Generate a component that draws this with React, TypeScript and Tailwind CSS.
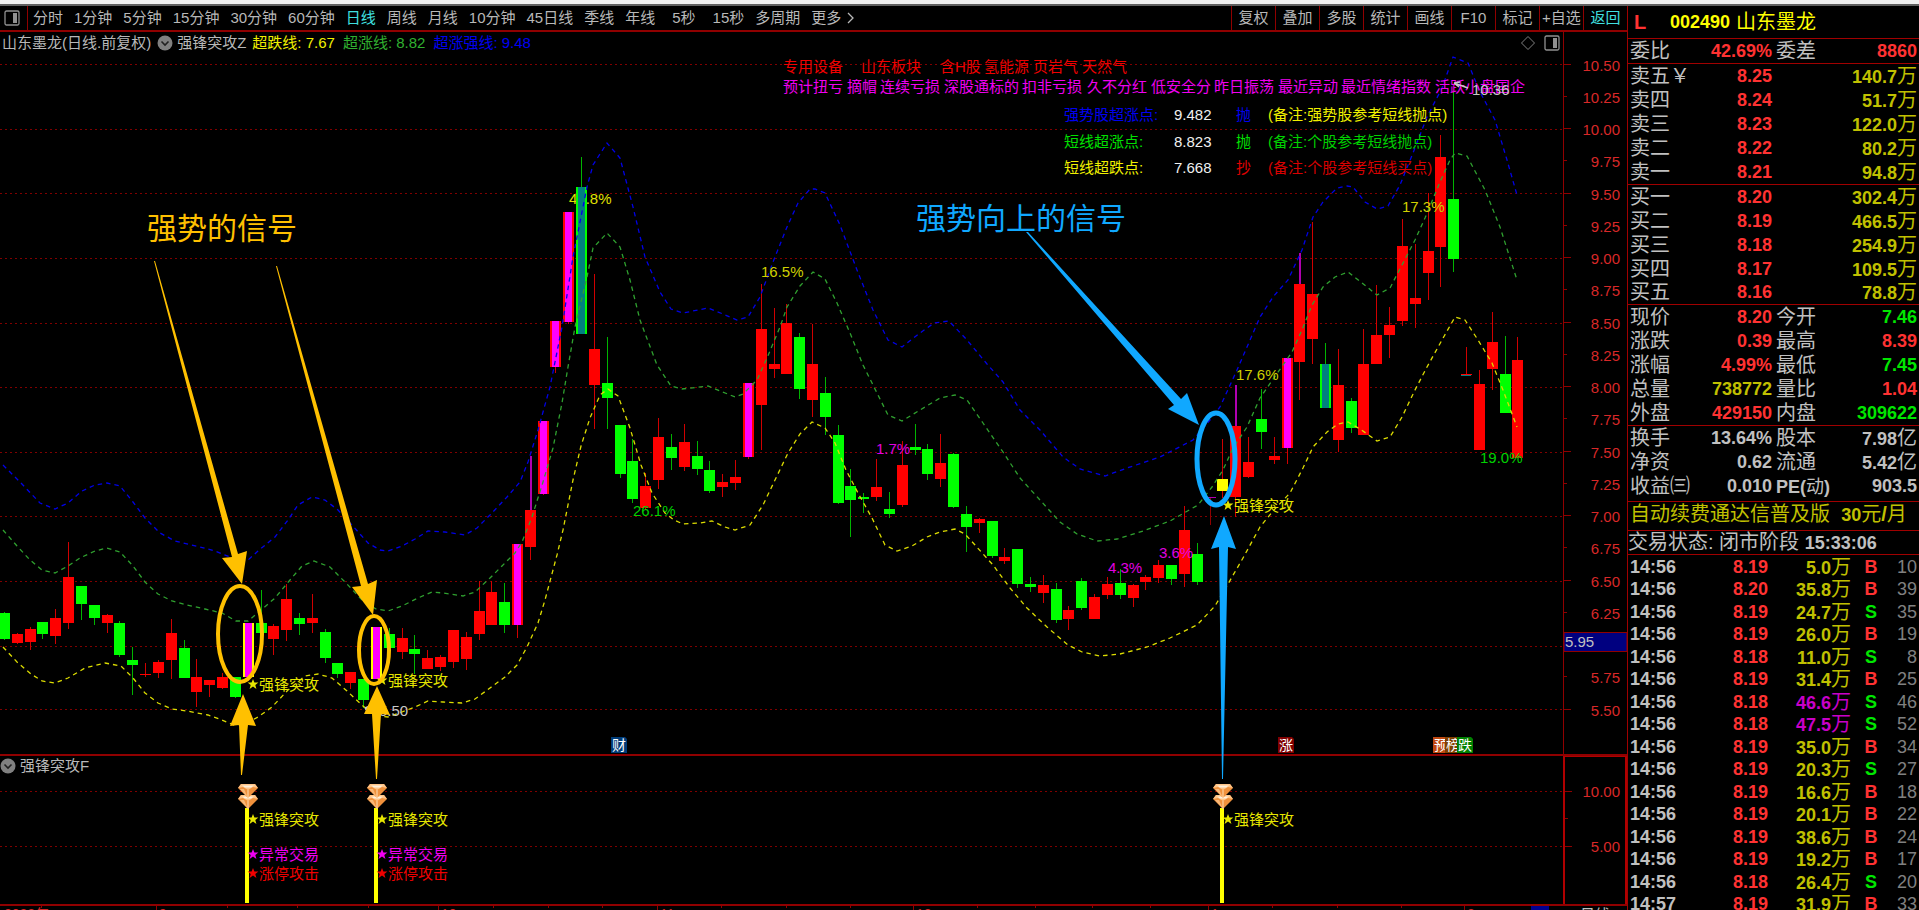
import clsx from "clsx";
import React, { useState } from "react";

// [high, top, bottom, low, kind, purple upper wick]
// r = up, g = down, m = limit up, s = signal bar, t = reversal, y = breakout
type Candle = [number, number, number, number, string, boolean?];

const candles: Candle[] = [
    [612, 613, 639, 640, "g"], [633, 634, 643, 644, "r"], [627, 629, 642, 650, "r"],
    [622, 622, 634, 639, "g"], [609, 618, 636, 644, "r"], [542, 577, 623, 629, "r"],
    [586, 586, 604, 620, "g"], [605, 605, 618, 625, "g"], [614, 615, 623, 633, "r"],
    [621, 623, 655, 657, "g"], [647, 660, 665, 695, "g"], [663, 674, 675, 677, "r"],
    [660, 662, 673, 678, "r"], [619, 633, 660, 679, "r"], [640, 648, 678, 678, "g"],
    [659, 677, 692, 707, "r"], [680, 680, 685, 697, "r"], [673, 677, 688, 689, "r"],
    [677, 677, 697, 698, "g"], [623, 623, 677, 677, "s"], [590, 623, 633, 633, "g"],
    [624, 626, 639, 655, "r"], [584, 599, 630, 641, "r"], [613, 618, 624, 635, "g"],
    [594, 618, 623, 633, "r"], [629, 632, 658, 663, "g"], [663, 663, 674, 678, "g"],
    [672, 672, 683, 689, "r"], [679, 679, 700, 708, "g"], [627, 627, 679, 679, "s"],
    [628, 634, 648, 648, "g"], [628, 638, 652, 659, "r"], [635, 649, 654, 674, "g"],
    [650, 658, 669, 669, "r"], [655, 657, 667, 671, "r"], [630, 630, 662, 668, "r"],
    [632, 637, 659, 670, "r"], [581, 611, 634, 640, "r"], [581, 592, 625, 625, "r"],
    [583, 602, 625, 633, "g"], [544, 544, 625, 638, "m"], [456, 510, 547, 560, "r", true],
    [421, 421, 494, 495, "m"], [321, 321, 367, 373, "m"], [212, 212, 322, 324, "m"],
    [157, 187, 334, 334, "t"], [274, 349, 385, 429, "r"], [337, 383, 398, 429, "g"],
    [425, 425, 474, 478, "g"], [439, 461, 499, 503, "g"], [473, 486, 508, 510, "r"],
    [418, 437, 480, 489, "r"], [434, 447, 458, 470, "g"], [424, 442, 467, 471, "r"],
    [441, 456, 469, 475, "g"], [461, 470, 491, 493, "g"], [474, 482, 487, 497, "r"],
    [460, 477, 483, 490, "r"], [383, 383, 457, 459, "m"], [284, 329, 405, 450, "r"],
    [308, 364, 369, 378, "r"], [304, 323, 374, 374, "r"], [333, 337, 389, 399, "g"],
    [324, 364, 400, 417, "r"], [377, 393, 417, 435, "g"], [425, 435, 503, 504, "g"],
    [469, 486, 500, 537, "g"], [493, 497, 499, 513, "g"], [459, 487, 497, 501, "r"],
    [492, 509, 514, 518, "g"], [441, 465, 505, 507, "r"], [424, 447, 450, 455, "g"],
    [444, 449, 474, 480, "g"], [434, 463, 479, 487, "r"], [453, 454, 507, 508, "g"],
    [506, 514, 527, 552, "g"], [518, 519, 523, 533, "r"], [521, 521, 556, 558, "g"],
    [548, 557, 561, 564, "r"], [549, 549, 584, 588, "g"], [577, 584, 587, 592, "g"],
    [575, 585, 593, 603, "r"], [583, 589, 620, 623, "g"], [606, 610, 619, 630, "r"],
    [578, 581, 608, 610, "g"], [594, 597, 619, 619, "r"], [577, 584, 595, 599, "r"],
    [569, 583, 595, 599, "g"], [584, 585, 598, 607, "r"], [575, 577, 582, 590, "r"],
    [560, 565, 578, 583, "r"], [565, 565, 579, 585, "g"], [506, 530, 574, 587, "r"],
    [543, 554, 582, 585, "g"], [497, 497, 498, 525, "f"], [439, 479, 491, 498, "y"],
    [385, 426, 497, 517, "r", true], [437, 462, 477, 478, "r"], [389, 419, 432, 449, "g"],
    [437, 456, 460, 464, "r"], [358, 358, 448, 464, "m"], [253, 284, 362, 400, "r", true],
    [222, 294, 339, 364, "r"], [343, 364, 408, 408, "t"], [349, 385, 440, 452, "r"],
    [398, 401, 428, 433, "g"], [329, 364, 435, 435, "r"], [285, 335, 364, 364, "r"],
    [307, 325, 335, 358, "r"], [219, 246, 321, 326, "r"], [244, 298, 304, 328, "r"],
    [193, 251, 273, 300, "r"], [135, 157, 247, 287, "r"], [92, 199, 259, 272, "g"],
    [347, 374, 375, 375, "r"], [370, 384, 450, 450, "r"], [312, 342, 369, 390, "r"],
    [336, 374, 413, 413, "g"], [337, 360, 458, 458, "r"],
];

const lowerBand =
    "3,647 17,662 31,674 42,681 55,683 68,678 85,668 105,663 121,666 133,678 145,693 158,703 172,709 187,711 208,715 222,720 234,725 245,724 258,717 272,707 288,690 305,676 318,674 332,678 347,691 363,706 376,716 388,717 402,712 415,707 428,701 443,702 462,703 475,699 490,688 505,677 517,665 527,647 538,623 545,600 553,570 557,555 563,530 573,480 581,446 590,418 600,395 608,389 618,396 630,428 641,465 652,493 665,513 674,520 683,524 700,523 712,521 725,527 735,530 750,525 763,505 775,480 788,453 800,434 812,422 825,428 835,443 846,470 858,493 872,518 885,545 897,551 912,546 927,537 940,532 955,529 965,534 975,545 993,565 1010,588 1027,608 1047,627 1068,645 1082,652 1100,656 1120,654 1147,647 1170,638 1197,625 1215,606 1228,584 1243,558 1260,527 1273,511 1290,493 1303,468 1313,447 1327,432 1338,424 1348,422 1360,429 1377,441 1390,437 1402,417 1415,390 1427,367 1442,340 1455,317 1465,320 1478,340 1492,363 1503,390 1517,427";
const middleBand =
    "3,530 17,546 30,560 42,570 55,573 68,566 80,558 95,551 107,548 120,552 133,566 145,582 158,594 172,601 187,605 205,609 222,613 236,621 248,621 260,611 275,598 290,580 302,566 314,561 330,567 345,582 363,601 376,609 388,611 402,606 418,598 432,592 443,593 463,596 475,592 490,578 502,566 515,553 522,542 532,517 543,482 553,448 562,403 568,367 575,327 587,277 593,248 607,233 620,247 630,280 640,320 657,365 671,386 682,389 708,386 735,397 743,394 757,380 767,358 780,327 787,307 800,286 813,272 825,279 837,303 850,333 863,365 877,393 888,415 902,421 920,410 940,398 955,395 967,400 983,423 1003,452 1020,478 1040,500 1060,522 1077,534 1097,541 1117,539 1143,531 1170,521 1198,505 1212,487 1223,470 1233,448 1247,427 1260,398 1283,365 1292,352 1302,330 1312,305 1323,287 1335,277 1348,272 1362,283 1377,295 1390,288 1402,265 1415,240 1425,218 1440,182 1450,160 1455,153 1467,156 1485,190 1500,227 1517,280";
const upperBand =
    "3,465 20,482 40,503 55,509 68,503 82,491 95,485 107,483 120,486 133,502 145,518 160,533 175,541 200,547 215,551 230,557 247,561 258,551 275,537 288,520 298,505 312,497 325,500 338,510 352,525 368,543 380,550 388,551 402,546 415,539 428,531 445,532 465,535 477,528 490,515 507,497 520,482 528,462 538,430 550,387 562,327 573,257 587,187 593,165 607,143 620,158 633,207 645,257 660,292 671,309 683,313 708,308 723,314 737,320 748,317 760,297 773,262 787,227 798,203 810,189 815,189 825,193 840,225 857,270 873,310 888,340 902,347 920,333 934,323 949,321 967,340 987,364 1003,382 1020,410 1040,430 1063,457 1080,469 1105,476 1127,468 1160,457 1193,440 1210,420 1220,407 1237,370 1247,347 1260,317 1273,297 1288,280 1302,250 1313,217 1323,202 1337,188 1347,186 1353,187 1365,202 1377,209 1388,206 1400,185 1413,153 1427,117 1442,88 1453,57 1468,63 1480,92 1495,120 1507,160 1517,195";

const bands = [
    { points: upperBand, color: "#0000e6" },
    { points: middleBand, color: "#2fa02f" },
    { points: lowerBand, color: "#dcdc00" },
];

const priceLabels = [
    "10.50", "10.25", "10.00", "9.75", "9.50", "9.25", "9.00", "8.75", "8.50", "8.25",
    "8.00", "7.75", "7.50", "7.25", "7.00", "6.75", "6.50", "6.25", "6.00", "5.75", "5.50",
];

const percents: [number, number, string, string][] = [
    [761, 277, "16.5%", "#d0d000"],
    [876, 454, "1.7%", "#e000e0"],
    [633, 516, "26.1%", "#00d000"],
    [1108, 573, "4.3%", "#e000e0"],
    [1159, 558, "3.6%", "#e000e0"],
    [1236, 380, "17.6%", "#d0d000"],
    [1402, 212, "17.3%", "#d0d000"],
    [1480, 463, "19.0%", "#00d000"],
];

const concepts: [number, string][] = [
    [783, "专用设备"], [861, "山东板块"], [940, "含H股"], [984, "氢能源"],
    [1033, "页岩气"], [1082, "天然气"],
];

const themes: [number, string][] = [
    [783, "预计扭亏"], [847, "摘帽"], [880, "连续亏损"], [944, "深股通标的"],
    [1022, "扣非亏损"], [1087, "久不分红"], [1151, "低安全分"], [1214, "昨日振荡"],
    [1278, "最近异动"], [1341, "最近情绪指数"], [1435, "活跃小盘国企"],
];

const points: [number, string, string, string, string, string, string][] = [
    [120, "强势股超涨点:", "#0000f0", "9.482", "抛", "(备注:强势股参考短线抛点)", "#f0f000"],
    [147, "短线超涨点:", "#00e000", "8.823", "抛", "(备注:个股参考短线抛点)", "#00d000"],
    [173, "短线超跌点:", "#f0f000", "7.668", "抄", "(备注:个股参考短线买点)", "#d80000"],
];

const badges: [number, string, string][] = [
    [611, "财", "#003c78"],
    [1278, "涨", "#800000"],
    [1433, "预", "#c04810"],
    [1445, "榜", "#804000"],
    [1457, "跌", "#008000"],
];

const periods = [
    "分时", "1分钟", "5分钟", "15分钟", "30分钟", "60分钟", "日线", "周线", "月线",
    "10分钟", "45日线", "季线", "年线", "5秒", "15秒", "多周期", "更多",
];
const actions = ["复权", "叠加", "多股", "统计", "画线", "F10", "标记", "+自选", "返回"];

const asks = [
    ["卖五￥", "8.25", "140.7"],
    ["卖四", "8.24", "51.7"],
    ["卖三", "8.23", "122.0"],
    ["卖二", "8.22", "80.2"],
    ["卖一", "8.21", "94.8"],
];
const bids = [
    ["买一", "8.20", "302.4"],
    ["买二", "8.19", "466.5"],
    ["买三", "8.18", "254.9"],
    ["买四", "8.17", "109.5"],
    ["买五", "8.16", "78.8"],
];

const RED = "text-[#ff3232]";
const GREEN = "text-[#00e600]";
const YELLOW = "text-[#c0c000]";
const GRAY = "text-[#c0c0c0]";

const quotes = [
    ["现价", "8.20", RED, "今开", "7.46", GREEN],
    ["涨跌", "0.39", RED, "最高", "8.39", RED],
    ["涨幅", "4.99%", RED, "最低", "7.45", GREEN],
    ["总量", "738772", YELLOW, "量比", "1.04", RED],
    ["外盘", "429150", RED, "内盘", "309622", GREEN],
];
const shares = [
    ["换手", "13.64%", GRAY, "股本", "7.98亿", GRAY],
    ["净资", "0.62", GRAY, "流通", "5.42亿", GRAY],
    ["收益㈢", "0.010", GRAY, "PE(动)", "903.5", GRAY],
];

const ticks: [string, string, string, string, number][] = [
    ["14:56", "8.19", "5.0", "B", 10],
    ["14:56", "8.20", "35.8", "B", 39],
    ["14:56", "8.19", "24.7", "S", 35],
    ["14:56", "8.19", "26.0", "B", 19],
    ["14:56", "8.18", "11.0", "S", 8],
    ["14:56", "8.19", "31.4", "B", 25],
    ["14:56", "8.18", "46.6", "S", 46],
    ["14:56", "8.18", "47.5", "S", 52],
    ["14:56", "8.19", "35.0", "B", 34],
    ["14:56", "8.19", "20.3", "S", 27],
    ["14:56", "8.19", "16.6", "B", 18],
    ["14:56", "8.19", "20.1", "B", 22],
    ["14:56", "8.19", "38.6", "B", 24],
    ["14:56", "8.19", "19.2", "B", 17],
    ["14:56", "8.18", "26.4", "S", 20],
    ["14:57", "8.19", "31.9", "B", 33],
];

function CandleBar({ index, candle }: { index: number; candle: Candle }) {
    const [high, top, bottom, low, kind, purple] = candle;
    const x = Math.round(4 + index * 12.825);
    const down = kind == "g" || kind == "t";
    const wick = down ? "#00b400" : kind == "f" ? "#900000" : "#d00000";
    const fill = down ? "#00ff00" : kind == "s" || kind == "y" ? "#ffff00" : "#ff0000";
    const core = kind == "m" || kind == "s" ? "#ff00ff" : kind == "t" ? "#008080" : null;

    return (
        <g shapeRendering="crispEdges">
            {high < top && (
                <rect x={x} y={high} width={purple ? 2 : 1} height={top - high} fill={purple ? "#b000b0" : wick} />
            )}
            {low > bottom && <rect x={x} y={bottom} width={1} height={low - bottom} fill={wick} />}
            <rect x={x - 5} y={top} width={11} height={Math.max(bottom - top, 1)} fill={kind == "f" ? "#b000b0" : fill} />
            {core && <rect x={x - 3} y={top} width={7} height={bottom - top} fill={core} />}
        </g>
    );
}

function GridLine({ y }: { y: number }) {
    return (
        <path d={`M0 ${y}.5H1563`} stroke="#800000" strokeDasharray="2 3" shapeRendering="crispEdges" />
    );
}

function Star({ x, y, label, color }: { x: number; y: number; label: string; color: string }) {
    return (
        <g fill={color} transform={`translate(${x} ${y})`}>
            <path d="M5 -5 L6.4 -1.4 10.4 -1.4 7.3 1 8.4 5 5 2.6 1.6 5 2.7 1 -.4 -1.4 3.6 -1.4Z" />
            <text x={11} y={6} fontSize={15}>
                {label}
            </text>
        </g>
    );
}

function Diamond({ x }: { x: number }) {
    return (
        <g transform={`translate(${x} 784)`}>
            {[11, 0].map((y) => (
                <g key={y} transform={`translate(0 ${y})`}>
                    <path d="M-10 4 L-7 0 H7 L10 4 L0 14Z" fill="#f0913c" />
                    <path d="M-10 4 L-7 0 H7 L10 4 L5 3 L0 6 L-5 3Z" fill="#ffc68a" />
                    <path d="M-6 1.5 H6 L3 3.5 H-3Z" fill="#fff0dc" />
                    <path d="M-4 5 L0 14 L-8 5Z" fill="#f9b878" />
                    <path d="M0 6 V14" stroke="#ffe0b8" />
                </g>
            ))}
        </g>
    );
}

function PriceChart() {
    return (
        <svg viewBox="0 54 1627 700" className="block w-full h-auto" fontSize={15}>
            {[65, 130, 194, 259, 324, 388, 453, 517, 582, 647, 710].map((y) => (
                <GridLine key={y} y={y - 1} />
            ))}
            <text x={569} y={204} fill="#e0e000">41.8%</text>
            {candles.map((candle, i) => (
                <CandleBar key={i} index={i} candle={candle} />
            ))}
            <path d="M1461 375.5h10" stroke="#008080" />
            {bands.map((band) => (
                <polyline key={band.color} points={band.points} fill="none" stroke={band.color} strokeWidth={1.3} strokeDasharray="4.5 4" />
            ))}
            {percents.map(([x, y, label, color]) => (
                <text key={label} x={x} y={y} fill={color}>{label}</text>
            ))}

            {concepts.map(([x, label]) => (
                <text key={label} x={x} y={72} fill="#f00000">{label}</text>
            ))}
            {themes.map(([x, label]) => (
                <text key={label} x={x} y={92} fill="#f000f0">{label}</text>
            ))}
            {points.map(([y, label, color, value, action, note, noteColor]) => (
                <g key={label}>
                    <text x={1064} y={y} fill={color}>{label}</text>
                    <text x={1174} y={y} fill="#f0f0f0">{value}</text>
                    <text x={1236} y={y} fill={action == "抄" ? "#e00000" : color}>{action}</text>
                    <text x={1268} y={y} fill={noteColor}>{note}</text>
                </g>
            ))}

            <g fill="#c8c8c8">
                <text x={1472} y={95}>10.36</text>
                <text x={379} y={716}>5.50</text>
                <path d="M1454 83l14 5M1454 83l5 4M1454 83l6-1M365 708l12 3M365 708l3 4M365 708l5-2" stroke="#c8c8c8" strokeWidth={1.5} />
            </g>
            <Star x={248} y={684} label="强锋突攻" color="#e6e600" />
            <Star x={377} y={680} label="强锋突攻" color="#e6e600" />
            <Star x={1223} y={505} label="强锋突攻" color="#e6e600" />

            {badges.map(([x, label, color]) => (
                <g key={label}>
                    <path d={`M${x} 737h14l2 2v14h-16z`} fill={color} />
                    <text x={x + 1} y={750} fontSize={14} fill="#fff">{label}</text>
                </g>
            ))}

            <path d="M1563.5 54V754" stroke="#900000" />
            {priceLabels.map((label, i) => {
                const y = Math.round(64.5 + i * 32.25);
                if (label == "6.00") return null;
                return (
                    <g key={label}>
                        <path d={`M1564 ${y - 0.5}h${i % 2 == 0 ? 7 : 3}`} stroke="#900000" />
                        <text x={1620} y={y + 6} fill="#d82828" textAnchor="end">{label}</text>
                    </g>
                );
            })}
            <rect x={1564} y={632.5} width={63} height={19} fill="#000080" stroke="#900000" />
            <text x={1565} y={647} fill="#c0c0c0">5.95</text>
        </svg>
    );
}

function SignalChart() {
    return (
        <svg viewBox="0 776 1627 128" className="block w-full h-auto" fontSize={15}>
            <GridLine y={791} />
            <GridLine y={846} />
            {[247, 376, 1222].map((x) => (
                <g key={x}>
                    <rect x={x - 2} y={808} width={4} height={95} fill="#ffff00" />
                    <Diamond x={x + 1} />
                    <Star x={x + 1} y={819} label="强锋突攻" color="#e6e600" />
                    {x < 1000 && <Star x={x + 1} y={854} label="异常交易" color="#f000f0" />}
                    {x < 1000 && <Star x={x + 1} y={873} label="涨停攻击" color="#f00000" />}
                </g>
            ))}
            <path d="M1564 776V904M1626 776V904" stroke="#b00000" strokeWidth={2} />
            <path d="M1565 791.5h7M1565 818.5h3M1565 846.5h7" stroke="#900000" />
            <g fill="#d82828" textAnchor="end">
                <text x={1620} y={797}>10.00</text>
                <text x={1620} y={852}>5.00</text>
            </g>
        </svg>
    );
}

// hand drawn marks on top of both panes
function Annotations() {
    return (
        <svg viewBox="0 32 1627 878" className="absolute inset-x-0 top-0 w-full h-auto pointer-events-none" fontSize={30}>
            <g fill="#ffc000">
                <text x={147} y={239}>强势的信号</text>
                <path d="M154 261h1L238 554 247 551 242 584 222 558 232 557Z" />
                <path d="M276 266h1L368 584 377 580 373 615 352 587 361 586Z" />
                <path d="M243 694L256 726 248 725 242 775h-1L239 725 230 726Z" />
                <path d="M377 686L390 715 381 714 377 779h-1L372 714 364 714Z" />
            </g>
            <g fill="none" stroke="#ffc000" strokeWidth={4}>
                <ellipse cx={240} cy={634} rx={22} ry={48} />
                <ellipse cx={374} cy={650} rx={15} ry={34} />
            </g>
            <g fill="#10a8ff">
                <text x={916} y={229}>强势向上的信号</text>
                <path d="M1026 232l2 0L1181 399 1187 393 1199 425 1168 409 1174 405Z" />
                <path d="M1224 516L1236 549 1228 547 1223 779h-1L1219 547 1211 549Z" />
            </g>
            <ellipse cx={1216} cy={459} rx={19} ry={46} fill="none" stroke="#10a8ff" strokeWidth={5} />
        </svg>
    );
}

function Chevron() {
    return (
        <svg viewBox="0 0 16 16" className="w-4 h-4 shrink-0">
            <circle cx={8} cy={8} r={7.5} fill="#808080" />
            <path d="M4.5 6.5L8 10l3.5-3.5" fill="none" stroke="#202020" strokeWidth={1.6} />
        </svg>
    );
}

function PanelIcon() {
    return (
        <svg viewBox="0 0 16 16" className="w-4 h-4 shrink-0">
            <rect x={1} y={1} width={14} height={14} rx={1.5} fill="none" stroke="#909090" strokeWidth={1.3} />
            <rect x={9} y={3} width={4} height={10} fill="#909090" />
        </svg>
    );
}

function TimeAxis() {
    const long = [156, 438, 657, 913, 1208, 1464];
    const short = [41, 227, 297, 368, 493, 548, 602, 721, 786, 850, 977, 1035, 1092, 1150, 1272, 1337, 1401];
    return (
        <svg viewBox="0 904 1627 24" className="block w-full h-auto" fontSize={14} fill="#d82828">
            <path d="M0 905H1627" stroke="#900000" strokeWidth={2} />
            {long.map((x) => (
                <path key={x} d={`M${x}.5 905v20`} stroke="#900000" />
            ))}
            {short.map((x) => (
                <path key={x} d={`M${x}.5 905v3`} stroke="#900000" />
            ))}
            <text x={4} y={919}>2022年</text>
            <text x={159} y={919}>9</text>
            <text x={441} y={919}>10</text>
            <text x={660} y={919}>11</text>
            <text x={916} y={919}>12</text>
            <text x={1211} y={919}>1</text>
            <text x={1467} y={919}>2</text>
            <rect x={1531} y={906} width={18} height={18} fill="#000090" />
            <text x={1580} y={920} fontSize={15} fill="#c0c0c0">日线</text>
        </svg>
    );
}

function BookTable({ rows }: { rows: string[][] }) {
    return (
        <table className="w-full border-b border-[#a00000]">
            <tbody>
                {rows.map(([label, price, volume]) => (
                    <tr key={label} className="h-6 leading-none">
                        <th className="pl-0.5 text-left font-normal text-xl leading-none">{label}</th>
                        <td className="w-[80px] text-right font-bold text-[#ff3232]">{price}</td>
                        <td className="w-[147px] pr-0.5 text-right text-[#c0c000]">
                            <b>{volume}</b>
                            <span className="text-xl leading-none">万</span>
                        </td>
                    </tr>
                ))}
            </tbody>
        </table>
    );
}

function QuoteTable({ rows }: { rows: string[][] }) {
    return (
        <table className="w-full table-fixed">
            <tbody>
                {rows.map(([label, value, color, label2, value2, color2]) => (
                    <tr key={label} className="h-6 leading-none">
                        <th className="w-[66px] pl-0.5 text-left font-normal text-xl leading-none whitespace-nowrap">{label}</th>
                        <td className={clsx("w-[78px] text-right font-bold", color)}>{value}</td>
                        <th className="w-[64px] pl-1 text-left font-normal text-xl leading-none whitespace-nowrap">
                            {label2.startsWith("PE") ? (
                                <span className="text-lg leading-none">
                                    <b>PE(</b>动<b>)</b>
                                </span>
                            ) : (
                                label2
                            )}
                        </th>
                        <td className={clsx("pr-0.5 text-right font-bold", color2)}>
                            {value2.replace("亿", "")}
                            {value2.endsWith("亿") && <span className="text-xl leading-none font-normal">亿</span>}
                        </td>
                    </tr>
                ))}
            </tbody>
        </table>
    );
}

function QuotePanel() {
    return (
        <aside className="w-[292px] shrink-0 border-l border-[#a00000] text-lg text-[#c0c0c0]">
            <div className="h-[33px] flex items-center gap-1.5 pl-1.5 border-b border-[#a00000] text-[#ffff00]">
                <b className="w-[30px] text-xl text-[#ff3232]">L</b>
                <b>002490</b>
                <span className="text-xl">山东墨龙</span>
            </div>
            <div className="border-b border-[#a00000]">
                <QuoteTable rows={[["委比", "42.69%", RED, "委差", "8860", RED]]} />
            </div>
            <BookTable rows={asks} />
            <BookTable rows={bids} />
            <div className="border-b border-[#a00000]">
                <QuoteTable rows={quotes} />
            </div>
            <div className="pb-[3px] border-b border-[#a00000]">
                <QuoteTable rows={shares} />
            </div>
            <div className="h-[29px] pl-0.5 border-b border-[#a00000] text-[#c0c000] text-xl leading-6 whitespace-nowrap">
                <a href="#renew">
                    自动续费通达信普及版&nbsp; <b className="text-lg leading-none">30</b>元<b>/</b>月
                </a>
            </div>
            <div className="h-6 border-b border-[#a00000] text-xl leading-[22px] whitespace-nowrap">
                交易状态: 闭市阶段 <b className="text-lg leading-none">15:33:06</b>
            </div>
            <table className="w-full table-fixed">
                <tbody>
                    {ticks.map(([time, price, volume, side, count], i) => (
                        <tr key={i} className="odd:h-[23px] even:h-[22px] leading-none">
                            <td className="w-[66px] pl-0.5 font-bold">{time}</td>
                            <td className="w-[74px] text-right font-bold text-[#ff3232]">{price}</td>
                            <td
                                className={clsx("w-[83px] text-right", {
                                    "text-[#c800c8]": Number(volume) > 40,
                                    "text-[#c0c000]": Number(volume) <= 40,
                                })}
                            >
                                <b>{volume}</b>
                                <span className="text-xl leading-none">万</span>
                            </td>
                            <td className={clsx("w-10 text-center font-bold", side == "B" ? RED : GREEN)}>{side}</td>
                            <td className="pr-0.5 text-right text-[#808080]">{count}</td>
                        </tr>
                    ))}
                </tbody>
            </table>
        </aside>
    );
}

function App() {
    const [period, setPeriod] = useState("日线");

    return (
        <div className="h-screen overflow-hidden flex flex-col bg-black text-[#b8b8b8] font-['Liberation_Sans','Noto_Sans_CJK_SC',sans-serif]">
            <div className="h-[6px] shrink-0 bg-[#f0f0f0] border-b-2 border-[#606060]"></div>
            <div className="flex items-start">
                <main className="flex-1 min-w-0">
                    <nav className="h-[26px] flex items-center border-b-2 border-[#900000] text-[15px] leading-6 whitespace-nowrap">
                        <div className="w-7 h-full flex items-center pl-1 border-r border-[#900000]">
                            <PanelIcon />
                        </div>
                        <div className="flex flex-1 gap-[11px] pl-[5px]">
                            {periods.map((name) => (
                                <button
                                    key={name}
                                    onClick={() => setPeriod(name)}
                                    className={clsx("cursor-pointer", {
                                        "text-[#40e0e0]": name == period,
                                        "pl-1.5": name.endsWith("秒"),
                                    })}
                                >
                                    {name}
                                    {name == "更多" && (
                                        <svg viewBox="0 0 8 12" className="inline w-2 h-3 ml-1.5 mb-0.5">
                                            <path d="M1 1l5 5-5 5" fill="none" stroke="#b8b8b8" strokeWidth={1.3} />
                                        </svg>
                                    )}
                                </button>
                            ))}
                        </div>
                        {actions.map((name) => (
                            <button
                                key={name}
                                className={clsx("w-11 h-full border-l border-[#900000] cursor-pointer", {
                                    "text-[#40e0e0]": name == "返回",
                                })}
                            >
                                {name}
                            </button>
                        ))}
                    </nav>

                    <div className="relative">
                        <div className="h-[22px] flex items-center text-[15px] leading-[22px] whitespace-nowrap">
                            <span className="pl-0.5">山东墨龙(日线.前复权)</span>
                            <span className="pl-1.5 pr-1 flex">
                                <Chevron />
                            </span>
                            <span>强锋突攻Z</span>
                            <span className="pl-1.5 text-[#f0f000]">超跌线: 7.67</span>
                            <span className="pl-2 text-[#30b030]">超涨线: 8.82</span>
                            <span className="pl-2 flex-1 text-[#0000f0]">超涨强线: 9.48</span>
                            <svg viewBox="0 0 16 16" className="w-4 h-4 mr-2">
                                <path d="M8 1.5L14.5 8 8 14.5 1.5 8Z" fill="none" stroke="#808080" />
                            </svg>
                            <PanelIcon />
                            <div className="w-[64px] h-full ml-[3px] border-l border-[#900000]"></div>
                        </div>
                        <PriceChart />
                        <div className="h-[22px] flex items-center gap-1 border-t-2 border-[#900000] text-[15px] leading-5">
                            <Chevron />
                            <span className="flex-1">强锋突攻F</span>
                            <div className="w-[64px] h-full border-x-2 border-t border-[#b00000]"></div>
                        </div>
                        <SignalChart />
                        <TimeAxis />
                        <Annotations />
                    </div>
                </main>
                <QuotePanel />
            </div>
        </div>
    );
}

export default App;
